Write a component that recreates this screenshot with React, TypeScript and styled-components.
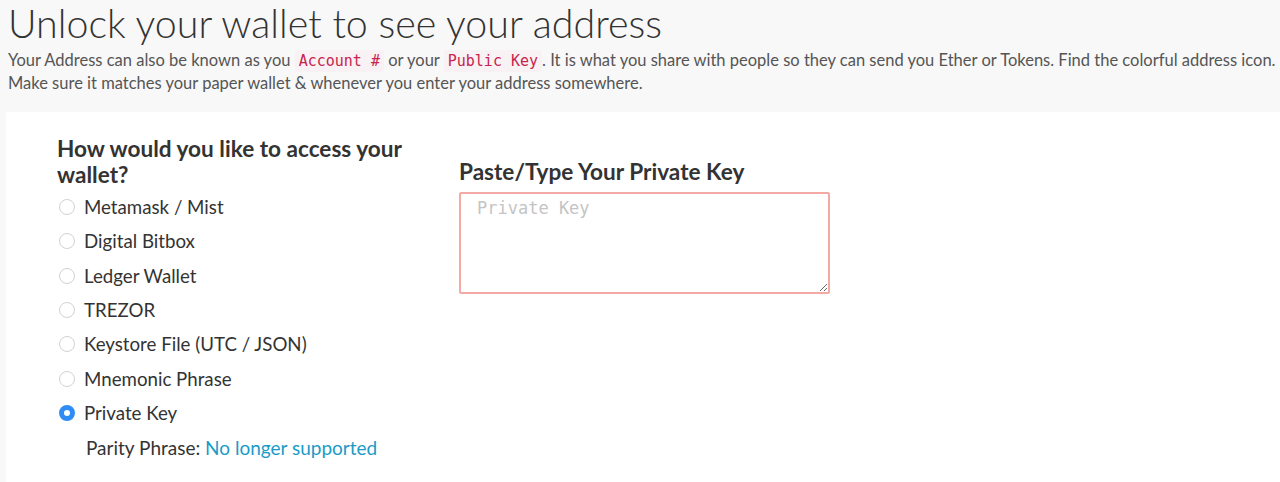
import styled, { createGlobalStyle } from "styled-components";
import { useState } from "react";

const GlobalStyle = createGlobalStyle`
  html, body {
    margin: 0;
    padding: 0;
    background: #f8f8f8;
    font-family: Lato, "Open Sans", sans-serif;
    color: #333;
  }
  * {
    box-sizing: border-box;
  }
`;

const walletOptions = [
  "Metamask / Mist",
  "Digital Bitbox",
  "Ledger Wallet",
  "TREZOR",
  "Keystore File (UTC / JSON)",
  "Mnemonic Phrase",
  "Private Key",
];

function App() {
  const [selected, setSelected] = useState("Private Key");

  return (
    <Page>
      <GlobalStyle />
      <Header>
        <Title>Unlock your wallet to see your address</Title>
        <Intro>
          Your Address can also be known as you <Code>Account #</Code> or your{" "}
          <Code>Public Key</Code>. It is what you share with people so they can
          send you Ether or Tokens. Find the colorful address icon.
          <br />
          Make sure it matches your paper wallet &amp; whenever you enter your
          address somewhere.
        </Intro>
      </Header>
      <Panel>
        <Column>
          <Heading>How would you like to access your wallet?</Heading>
          <OptionList>
            {walletOptions.map((option) => (
              <Option key={option} onClick={() => setSelected(option)}>
                <Radio checked={selected === option} />
                <span>{option}</span>
              </Option>
            ))}
          </OptionList>
          <Note>
            Parity Phrase: <Link href="#">No longer supported</Link>
          </Note>
        </Column>
        <KeyColumn>
          <Heading>Paste/Type Your Private Key</Heading>
          <KeyInput placeholder="Private Key" />
        </KeyColumn>
      </Panel>
    </Page>
  );
}

const Page = styled.div`
  min-height: 482px;
  display: flex;
  flex-direction: column;
`;

const Header = styled.div`
  padding: 0 4px 0 8px;
  height: 112px;
`;

const Title = styled.h1`
  margin: 0;
  font-size: 39.4px;
  font-weight: 300;
  line-height: 46px;
  color: #333;
`;

const Intro = styled.p`
  margin: 3px 0 0;
  font-size: 16.5px;
  line-height: 23px;
  color: #555;
  white-space: nowrap;
`;

const Code = styled.code`
  font-family: "DejaVu Sans Mono", "Liberation Mono", monospace;
  font-size: 15px;
  line-height: 1;
  color: #c7254e;
  background: #f9f2f4;
  padding: 2px 4px;
  border-radius: 3px;
`;

const Panel = styled.div`
  flex: 1;
  margin-left: 6px;
  background: #fff;
  padding: 24px 0 0 51px;
  display: grid;
  grid-template-columns: 370px 371px;
  column-gap: 32px;
  align-items: start;
`;

const Column = styled.div`
  display: flex;
  flex-direction: column;
`;

const KeyColumn = styled.div`
  display: flex;
  flex-direction: column;
  padding-top: 23px;
`;

const Heading = styled.h3`
  margin: 0 0 2px;
  font-size: 22.6px;
  font-weight: 700;
  line-height: 26px;
  color: #333;
`;

const OptionList = styled.div`
  display: flex;
  flex-direction: column;
`;

const Option = styled.label`
  display: flex;
  align-items: center;
  gap: 9px;
  height: 34.3px;
  padding-left: 2px;
  font-size: 18.7px;
  color: #333;
  cursor: pointer;
`;

const Radio = styled.span<{ checked: boolean }>`
  width: 16px;
  height: 16px;
  border-radius: 50%;
  flex-shrink: 0;
  background: #fff;
  border: ${({ checked }) =>
    checked ? "5px solid #2f8cf5" : "1px solid #d2d2d2"};
`;

const Note = styled.div`
  padding-left: 29px;
  height: 34px;
  display: flex;
  align-items: center;
  font-size: 19px;
  color: #333;
  white-space: pre;
`;

const Link = styled.a`
  color: #1a9bc7;
  text-decoration: none;
`;

const KeyInput = styled.textarea`
  width: 371px;
  height: 102px;
  margin-top: 5px;
  padding: 4px 16px;
  border: 2px solid #f4aaa4;
  border-radius: 2px;
  font-family: "DejaVu Sans Mono", "Liberation Mono", monospace;
  font-size: 17px;
  color: #333;
  resize: vertical;
  outline: none;

  &::placeholder {
    color: #c4c4c4;
  }
`;

export default App;
